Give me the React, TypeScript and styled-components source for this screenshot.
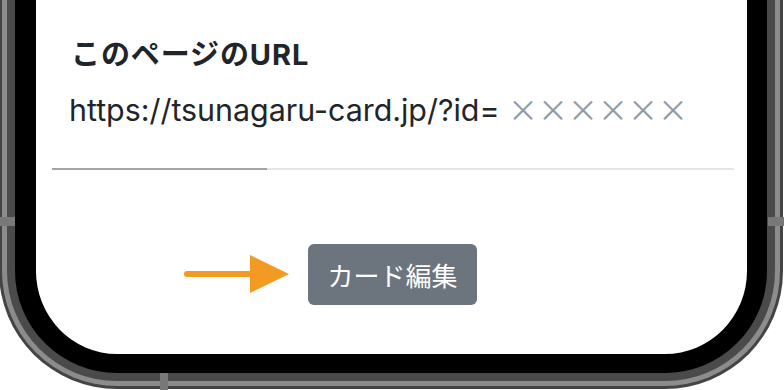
import React from 'react'
import styled, { createGlobalStyle } from 'styled-components'

const GlobalStyle = createGlobalStyle`
  html, body {
    margin: 0;
    padding: 0;
    background: #fff;
    overflow: hidden;
  }
  body {
    font-family: Inter, "Noto Sans CJK JP", sans-serif;
    color: #212529;
  }
`

const Stage = styled.div`
  position: relative;
  width: 784px;
  height: 390px;
  overflow: hidden;
`

const Screen = styled.div`
  box-sizing: border-box;
  width: 752px;
  height: 373px;
  margin-left: 15px;
  background: #fff;
  border: 20px solid #000;
  border-top: none;
  border-left-width: 21px;
  border-bottom-width: 19px;
  border-radius: 0 0 102px 102px;
  box-shadow: 0 0 0 8px #4a4a4a, 0 0 0 13px #8c8c8c, 0 0 0 16px #444;
  display: flex;
  flex-direction: column;
`

const Band = styled.div<{ $side: 'left' | 'right' | 'bottom' }>`
  position: absolute;
  background: #787878;
  ${p => p.$side === 'left' && 'left: 0; top: 217px; width: 15px; height: 9px;'}
  ${p => p.$side === 'right' && 'right: 0; top: 217px; width: 16px; height: 9px;'}
  ${p => p.$side === 'bottom' && 'left: 160px; top: 373px; width: 8px; height: 17px;'}
`

const Section = styled.section`
  padding: 0 13px 0 16px;
`

const Title = styled.h2`
  margin: 38px 0 0 19px;
  font-size: 29px;
  font-weight: 700;
  line-height: 34px;
  letter-spacing: 0.9px;
`

const Url = styled.p`
  margin: 17px 0 0 17px;
  font-size: 30.4px;
  line-height: 38px;
  font-weight: 400;
  white-space: nowrap;
`

const Masked = styled.span`
  font-family: "Noto Sans CJK JP", sans-serif;
  font-size: 30px;
  font-weight: 400;
  color: #999;
`

const Tabs = styled.div`
  display: flex;
  height: 2px;
  margin-top: 39px;
`

const TabLine = styled.div<{ $active?: boolean }>`
  height: 2px;
  background: ${p => (p.$active ? '#a3a3a3' : '#e4e4e9')};
  ${p => (p.$active ? 'width: 215px;' : 'flex: 1;')}
`

const Actions = styled.div`
  display: flex;
  justify-content: center;
  margin-top: 74px;
`

const ButtonWrap = styled.div`
  position: relative;
  margin-left: 2px;
`

const Arrow = styled.svg`
  position: absolute;
  right: calc(100% + 18px);
  top: 10px;
`

const EditButton = styled.button`
  box-sizing: border-box;
  width: 169px;
  height: 61px;
  border: none;
  border-radius: 6px;
  background: #6c757d;
  color: #fff;
  font-family: "Noto Sans CJK JP", sans-serif;
  font-size: 26px;
  font-weight: 400;
  padding: 0;
  cursor: pointer;
`

export default function App() {
  return (
    <Stage>
      <GlobalStyle />
      <Screen>
        <Section>
          <Title>このページのURL</Title>
          <Url>
            https://tsunagaru-card.jp/?id= <Masked>××××××</Masked>
          </Url>
          <Tabs>
            <TabLine $active />
            <TabLine />
          </Tabs>
        </Section>
        <Actions>
          <ButtonWrap>
            <Arrow width="106" height="40" viewBox="0 0 106 40">
              <line x1="3" y1="20" x2="70" y2="20" stroke="#f39a22" strokeWidth="6" strokeLinecap="round" />
              <polygon points="66,1 105,20 66,39" fill="#f39a22" />
            </Arrow>
            <EditButton>カード編集</EditButton>
          </ButtonWrap>
        </Actions>
      </Screen>
      <Band $side="left" />
      <Band $side="right" />
      <Band $side="bottom" />
    </Stage>
  )
}
